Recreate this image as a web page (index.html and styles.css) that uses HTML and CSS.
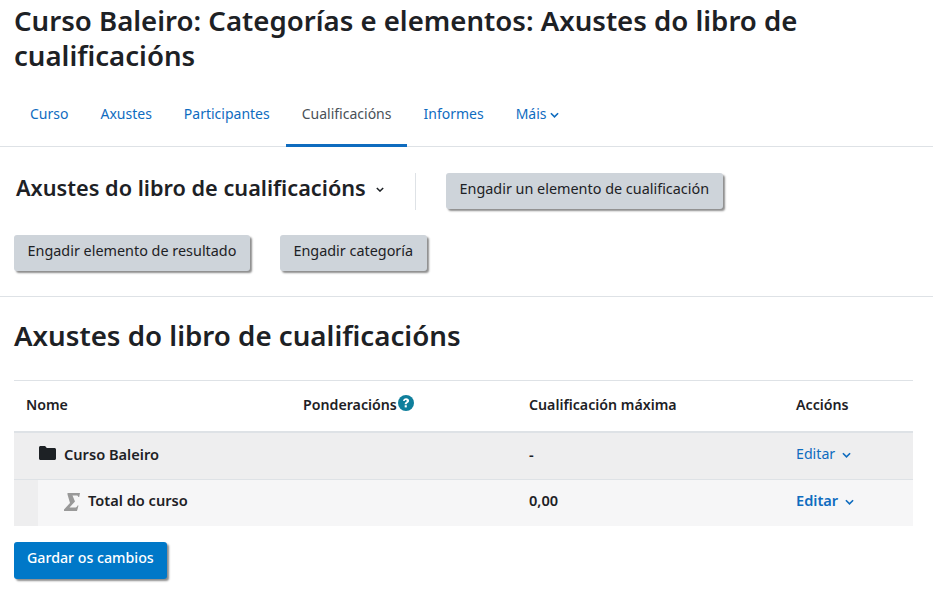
FILE: index.html
```html
<!DOCTYPE html>
<html lang="gl">
<head>
<meta charset="utf-8">
<title>Axustes do libro de cualificacións</title>
<link rel="stylesheet" href="styles.css">
</head>
<body>
<header class="page-head">
  <h1 class="page-title">Curso Baleiro: Categorías e elementos: Axustes do libro de cualificacións</h1>
</header>
<nav class="tabs">
  <a class="tab" href="#">Curso</a>
  <a class="tab" href="#">Axustes</a>
  <a class="tab" href="#">Participantes</a>
  <a class="tab tab-active" href="#">Cualificacións</a>
  <a class="tab" href="#">Informes</a>
  <a class="tab" href="#">Máis <svg class="chev chev-tab" viewBox="0 0 10 6"><path d="M1 1l4 4 4-4" /></svg></a>
</nav>
<section class="actions">
  <div class="actions-row">
    <div class="selector">
      <span class="selector-label">Axustes do libro de cualificacións</span>
      <svg class="chev chev-dark" viewBox="0 0 10 6"><path d="M1 1l4 4 4-4" /></svg>
    </div>
    <a class="btn btn-first" href="#">Engadir un elemento de cualificación</a>
  </div>
  <div class="actions-row actions-row-2">
    <a class="btn" href="#">Engadir elemento de resultado</a>
    <a class="btn" href="#">Engadir categoría</a>
  </div>
</section>
<main class="content">
  <h2 class="section-title">Axustes do libro de cualificacións</h2>
  <div class="grade-table">
    <div class="row row-head">
      <div class="cell cell-name">Nome</div>
      <div class="cell cell-weight">Ponderacións<svg class="help" viewBox="0 0 16 16"><circle cx="8" cy="8" r="8" fill="#0f7f9c"/><path d="M5 6.100C5.100 4.300 6.400 3.200 8.100 3.200c1.800 0 3 1.100 3 2.600 0 1.100-.7 1.700-1.500 2.200-.6.4-.8.6-.8 1.300H6.700c0-1.300.4-1.800 1.200-2.300.6-.4.9-.7.9-1.100 0-.5-.4-.8-.9-.8-.7 0-1 .4-1.100 1z" fill="#fff"/><rect x="6.700" y="10.200" width="2.100" height="2.200" fill="#fff"/></svg></div>
      <div class="cell cell-max">Cualificación máxima</div>
      <div class="cell cell-act">Accións</div>
    </div>
    <div class="row row-cat">
      <div class="cell cell-name cat-name">
        <svg class="folder" viewBox="0 0 17 14"><path d="M1.500 0h4.600l1.700 2h7.700c.8 0 1.500.7 1.500 1.500v9c0 .8-.7 1.500-1.500 1.500h-14C.7 14 0 13.300 0 12.500v-11C0 .7.7 0 1.500 0z" fill="#1d2125"/></svg>
        <span>Curso Baleiro</span>
      </div>
      <div class="cell cell-weight"></div>
      <div class="cell cell-max">-</div>
      <div class="cell cell-act"><a class="edit edit-light" href="#">Editar <svg class="chev chev-edit" viewBox="0 0 10 6"><path d="M1 1l4 4 4-4" /></svg></a></div>
    </div>
    <div class="row-wrap">
      <div class="row row-total">
        <div class="cell cell-name total-name">
          <svg class="sigma" viewBox="0 0 16 18"><path d="M3.500 0H16l-.8 4h-1c0-1-.6-1.500-1.600-1.500H8.500l2.500 6L5.500 14.500H11c1.200 0 2-.6 2.500-2h1L13 18H0v-1.500L6 10 3.500 1.500z" fill="#999"/></svg>
          <span>Total do curso</span>
        </div>
        <div class="cell cell-weight"></div>
        <div class="cell cell-max">0,00</div>
        <div class="cell cell-act"><a class="edit" href="#">Editar <svg class="chev chev-edit" viewBox="0 0 10 6"><path d="M1 1l4 4 4-4" /></svg></a></div>
      </div>
    </div>
  </div>
  <a class="btn btn-primary" href="#">Gardar os cambios</a>
</main>
</body>
</html>
```
FILE: styles.css
```css
* { box-sizing: border-box; }
html, body { margin: 0; padding: 0; }
body {
  width: 933px;
  height: 593px;
  overflow: hidden;
  background: #fff;
  color: #1d2125;
  font-family: "Noto Sans", "Open Sans", sans-serif;
  font-size: 14px;
}
a { text-decoration: none; }
.page-head { padding: 3px 14px 0; }
.page-title {
  margin: 0;
  font-size: 27.6px;
  line-height: 35px;
  font-weight: 600;
}
.tabs {
  display: flex;
  height: 74px;
  padding-left: 14px;
  border-bottom: 1px solid #dee2e6;
}
.tab {
  display: flex;
  align-items: center;
  gap: 3px;
  height: 74px;
  padding: 9px 16px 0;
  color: #0f6cbf;
  font-size: 14px;
  border-bottom: 3px solid transparent;
}
.tab-active { color: #495057; border-bottom-color: #0f6cbf; }
.chev { fill: none; stroke-width: 1.800; }
.chev-tab { width: 9px; height: 6px; stroke: #0f6cbf; margin-top: 3px; }
.chev-dark { width: 8px; height: 5px; stroke: #1d2125; margin-top: 5px; }
.chev-edit { width: 9px; height: 6px; stroke: #0f6cbf; margin-left: 3px; margin-bottom: 1px; }
.actions { padding: 26px 14px 0; height: 150px; border-bottom: 1px solid #dee2e6; }
.actions-row { display: flex; align-items: flex-start; }
.actions-row-2 { margin-top: 25px; gap: 30px; }
.selector {
  display: flex;
  align-items: center;
  gap: 10px;
  height: 37px;
  width: 402px;
  padding-left: 2px;
  padding-bottom: 9px;
  margin-right: 30px;
  border-right: 1px solid #dee2e6;
}
.selector-label { font-size: 21.7px; font-weight: 600; }
.btn {
  display: inline-block;
  height: 36px;
  padding: 0 13.500px;
  line-height: 31px;
  font-size: 14.4px;
  color: #1d2125;
  background: #ced4da;
  border-radius: 3px;
  box-shadow: 2px 2px 2px rgba(0, 0, 0, .45);
}
.content { padding: 0 20px 0 14px; }
.section-title {
  margin: 19px 0 0;
  font-size: 27.7px;
  line-height: 39px;
  font-weight: 600;
}
.grade-table { margin-top: 25px; border-top: 1px solid #dee2e6; font-weight: 600; font-size: 14.2px; }
.row { display: flex; }
.cell { flex: none; padding-left: 12px; }
.cell-name { width: 277px; }
.cell-weight { width: 226px; display: flex; align-items: center; gap: 1px; }
.cell-max { width: 267px; }
.cell-act { flex: 1; }
.row-head {
  height: 52px;
  align-items: center;
  padding-bottom: 4px;
  border-bottom: 2px solid #dee2e6;
}
.help { width: 16px; height: 16px; margin-top: -3px; }
.row-cat {
  height: 47px;
  align-items: center;
  padding-bottom: 4px;
  background: #eeeeef;
  border-bottom: 1px solid #dee2e6;
  font-size: 14.6px;
}
.row-cat .edit-light { font-size: 14.2px; }
.row-cat .cell-act { padding-bottom: 3px; }
.cat-name { display: flex; align-items: center; gap: 8px; padding-left: 25px; }
.folder { width: 17px; height: 14px; margin-top: -2px; }
.row-wrap { background: #eeeeef; padding-left: 24px; }
.row-total { height: 46px; align-items: center; padding-bottom: 7px; background: #f6f6f7; font-size: 14.6px; }
.row-total .cell-name { width: 253px; }
.total-name { display: flex; align-items: center; gap: 8px; padding-left: 26px; }
.sigma { width: 16px; height: 18px; margin-top: 5px; }
.edit { color: #0f6cbf; }
.edit-light { font-weight: 400; }
.btn-primary {
  margin-top: 16px;
  height: 37px;
  line-height: 32px;
  padding: 0 13px;
  color: #fff;
  font-size: 14.2px;
  font-weight: 500;
  background: #0078c8;
}
```
